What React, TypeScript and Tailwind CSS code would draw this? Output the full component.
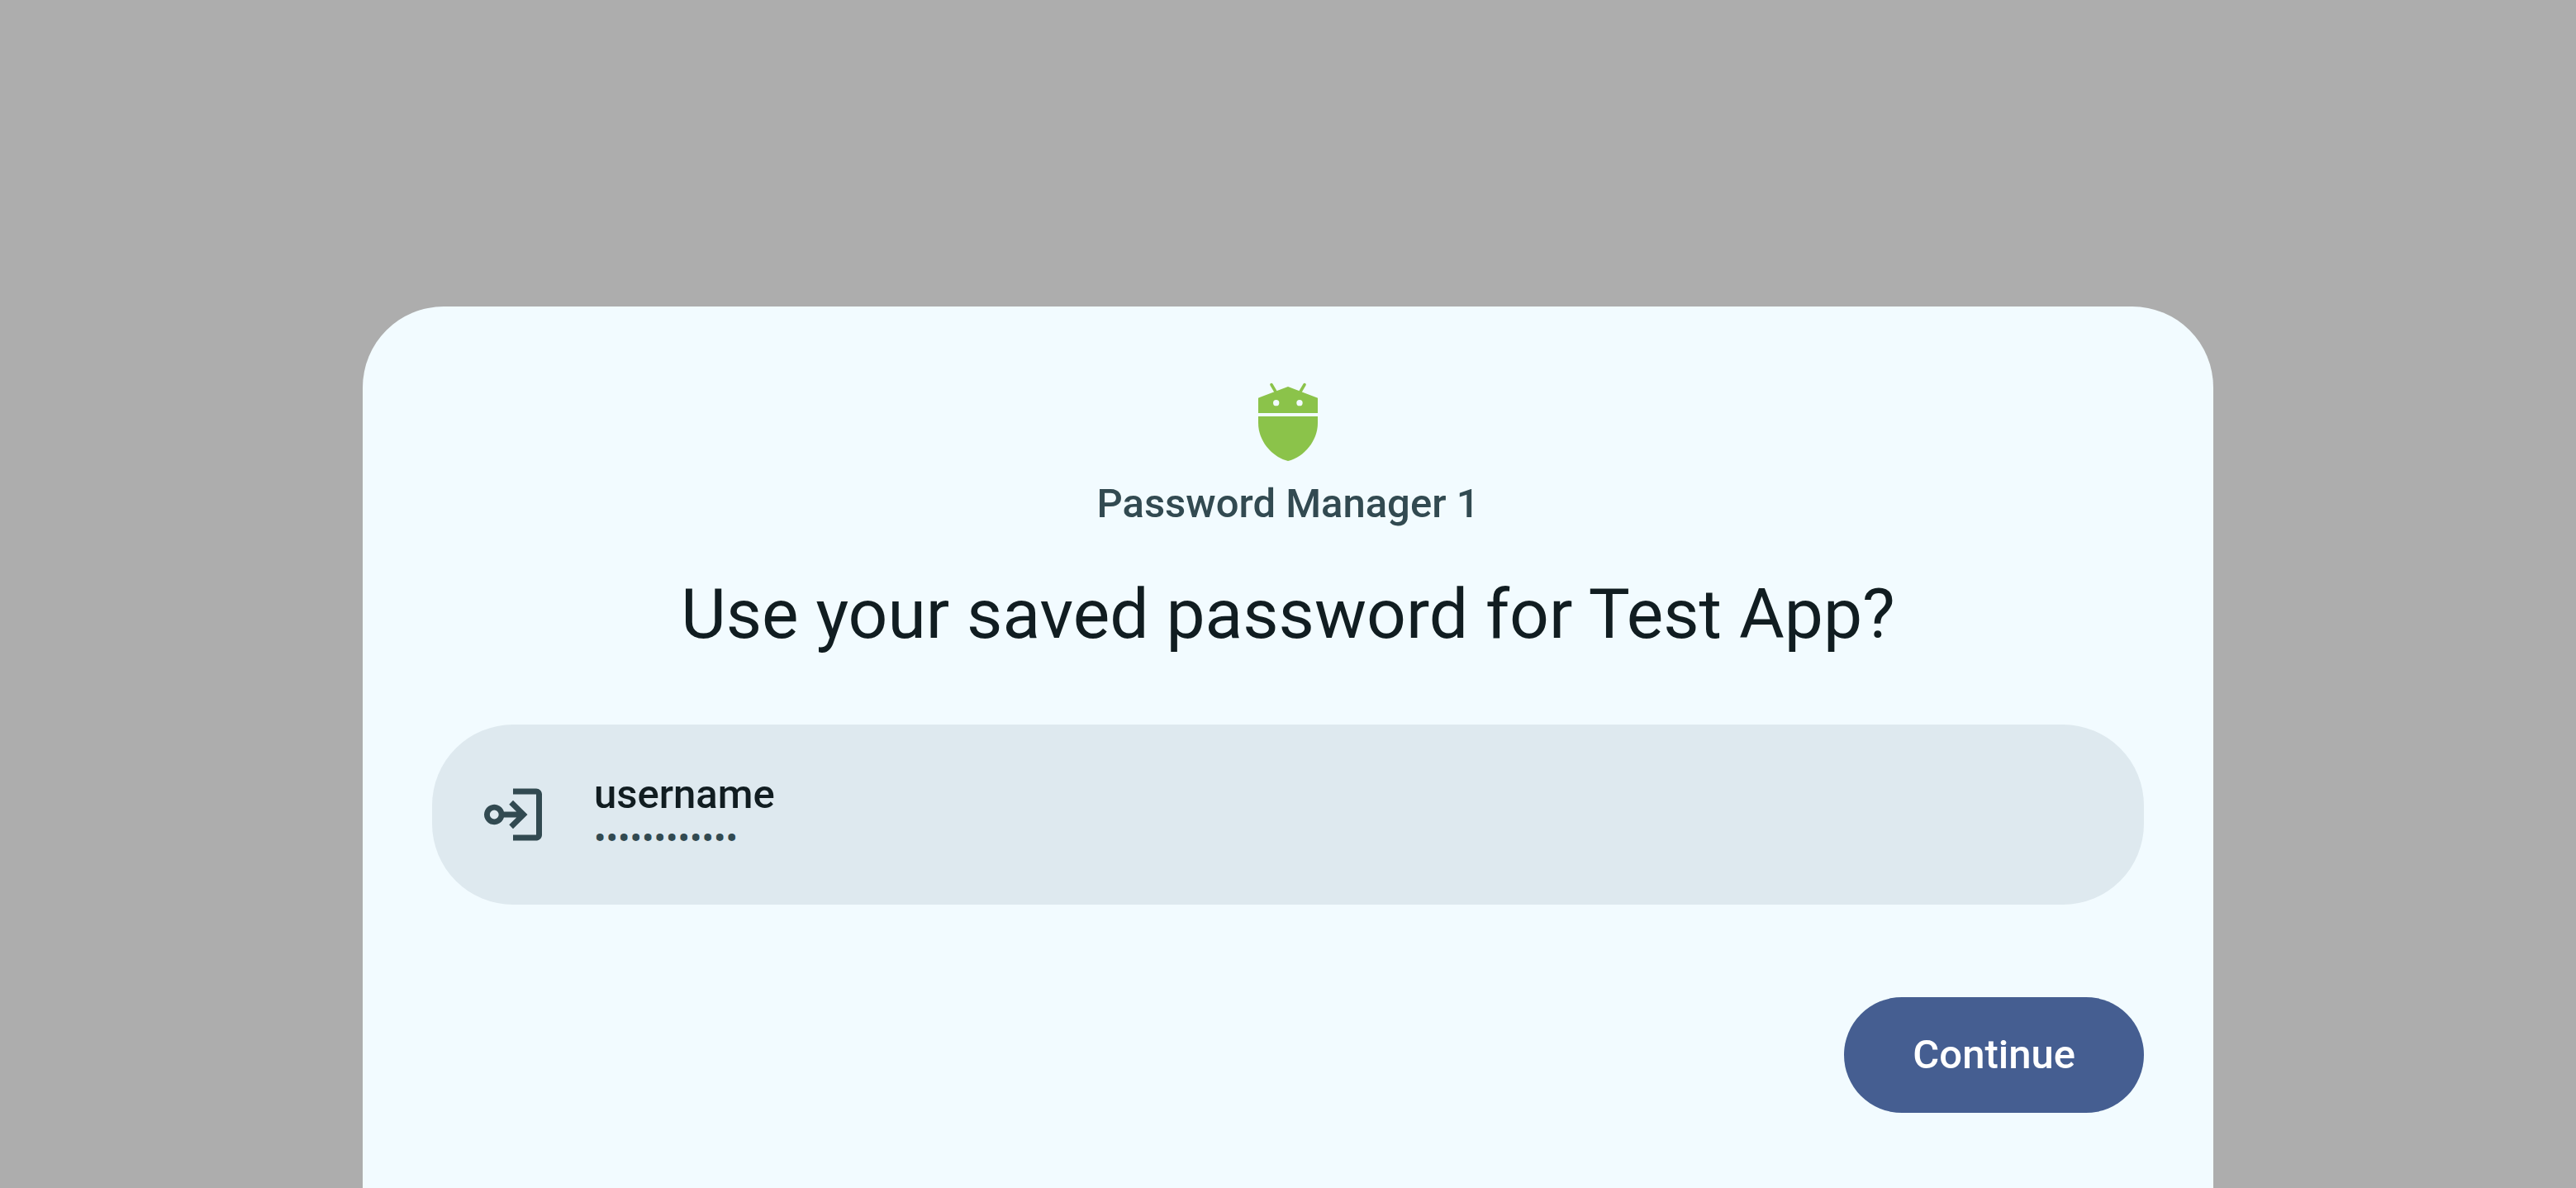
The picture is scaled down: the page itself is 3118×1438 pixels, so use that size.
function ManagerLogo() {
  return (
    <svg viewBox="9 15 336 336" className="size-28" aria-hidden="true">
      <g fill="#8bc34a">
        <path d="M69 95 177 54 285 95V150H69Z" />
        <path d="M69 162H285V186C285 250 237 309 177 324C117 309 69 250 69 186Z" />
      </g>
      <g stroke="#8bc34a" strokeWidth="11" strokeLinecap="round">
        <path d="M117 47 133 74" />
        <path d="M237 47 221 74" />
      </g>
      <circle cx="134" cy="113" r="11" fill="#f2fbff" />
      <circle cx="219" cy="113" r="11" fill="#f2fbff" />
    </svg>
  );
}

function PasswordIcon() {
  return (
    <svg viewBox="0 0 24 24" className="size-[84px] shrink-0" fill="#324a51" aria-hidden="true">
      <path d="M20 5v14h-8v2h8c1.1 0 2-.9 2-2V5c0-1.1-.9-2-2-2h-8v2z" />
      <path d="M12 7.1 10.65 8.5 13.2 11H8.85a3.5 3.5 0 1 0 0 2H13.2L10.65 15.5 12 16.9 17 12ZM5.5 13.55a1.55 1.55 0 1 1 0-3.1 1.55 1.55 0 0 1 0 3.1Z" />
    </svg>
  );
}

export default function App() {
  return (
    <div className="flex min-h-screen flex-col bg-[#adadad] pt-[371px] font-['Roboto',sans-serif]">
      <main className="mx-auto flex w-full max-w-[2240px] grow flex-col rounded-t-[98px] bg-[#f2fbff] px-[84px] pt-[84px] pb-[84px]">
        <header className="flex flex-col items-center text-center">
          <ManagerLogo />
          <p className="mt-2 text-[49px] leading-[70px] font-medium text-[#324a51]">Password Manager 1</p>
          <h1 className="mt-[43px] text-[84px] leading-[112px] text-[#111d21]">Use your saved password for Test App?</h1>
        </header>
        <button
          type="button"
          className="mt-[77px] flex w-full items-center gap-14 rounded-[98px] bg-[#dee9ef] px-14 py-[57px] text-left"
        >
          <PasswordIcon />
          <span className="flex flex-col">
            <span className="text-[49px] leading-[56px] font-medium text-[#111d21]">username</span>
            <span className="text-[43px] leading-[48px] text-[#324a51]">••••••••••••</span>
          </span>
        </button>
        <button
          type="button"
          className="mt-28 h-[140px] self-end rounded-full bg-[#455e91] px-[83px] text-[49px] leading-[70px] font-medium text-white"
        >
          Continue
        </button>
      </main>
    </div>
  );
}
